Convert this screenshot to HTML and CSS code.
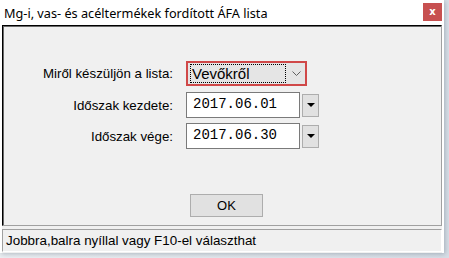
FILE: index.html
```html
<!DOCTYPE html>
<html lang="hu">
<head>
<meta charset="UTF-8" />
<title>Mg-i, vas- és acéltermékek fordított ÁFA lista</title>
<link rel="stylesheet" href="styles.css">
</head>
<body>
  <div class="window" role="dialog" aria-label="Mg-i, vas- és acéltermékek fordított ÁFA lista">
    <div class="titlebar">
      <span class="title">Mg-i, vas- és acéltermékek fordított ÁFA lista</span>
      <button class="close" aria-label="Bezárás">x</button>
    </div>
    <div class="client">
      <div class="panel">
        <div class="row row-first">
          <label class="label">Miről készüljön a lista:</label>
          <div class="combo">
            <span class="combo-focus">Vevőkről</span>
            <svg class="chevron" width="9" height="6" viewBox="0 0 9 6">
              <polyline points="0.5,0.5 4.5,4.5 8.5,0.5" fill="none" stroke="#606060" stroke-width="1"/>
            </svg>
          </div>
        </div>
        <div class="row">
          <label class="label">Időszak kezdete:</label>
          <div class="date-field">2017.06.01</div>
          <div class="drop"><span class="tri"></span></div>
        </div>
        <div class="row row-last">
          <label class="label">Időszak vége:</label>
          <div class="date-field">2017.06.30</div>
          <div class="drop"><span class="tri"></span></div>
        </div>
        <button class="ok">OK</button>
      </div>
      <div class="status">Jobbra,balra nyíllal vagy F10-el választhat</div>
    </div>
  </div>
</body>
</html>
```

FILE: styles.css
```css
* {
  box-sizing: border-box;
}
body {
  margin: 0;
  width: 449px;
  height: 258px;
  overflow: hidden;
  background: linear-gradient(100deg, #eef1f4 0%, #e2e7ec 60%, #d7dee6 100%);
  font-family: 'Liberation Sans', Arial, sans-serif;
  color: #000;
}
.window {
  width: 444px;
  height: 253px;
  background: #fff;
  display: flex;
  flex-direction: column;
  box-shadow: 1px 1px 5px rgba(60, 80, 100, 0.35);
}
.titlebar {
  height: 25px;
  display: flex;
  align-items: flex-start;
  justify-content: space-between;
  padding-left: 4px;
  padding-right: 2px;
}
.title {
  font-family: 'Noto Sans', sans-serif;
  font-size: 12.7px;
  line-height: 16px;
  margin-top: 5px;
  color: #000;
}
.close {
  width: 19px;
  height: 18px;
  margin-top: 3px;
  border: none;
  padding: 0;
  background: #c75050;
  color: #fff;
  font-family: 'DejaVu Sans', sans-serif;
  font-weight: bold;
  font-size: 10px;
  line-height: 16px;
}
.client {
  flex: 1;
  margin-left: 2px;
  width: 440px;
  background: #f0f0f0;
  display: flex;
  flex-direction: column;
  padding-bottom: 1px;
}
.panel {
  height: 201px;
  border-top: 1px solid #000;
  border-left: 1px solid #000;
  border-right: 1px solid #a0a0a0;
  border-bottom: 1px solid #a0a0a0;
  box-shadow: inset 1px 1px 0 #696969;
  padding: 35px 0 0 3px;
  display: flex;
  flex-direction: column;
}
.row {
  display: flex;
  align-items: center;
  margin-bottom: 5px;
}
.row-first {
  margin-bottom: 6px;
}
.row-last {
  margin-bottom: 45px;
}
.label {
  width: 167px;
  text-align: right;
  font-size: 13.3px;
  margin-right: 13px;
}
.combo {
  width: 121px;
  height: 25px;
  border: 2px solid #d04848;
  background: #e5e5e5;
  display: flex;
  align-items: center;
  padding: 0 0 0 2px;
}
.combo-focus {
  width: 96px;
  height: 19px;
  border: 1px dotted #000;
  font-size: 15px;
  line-height: 17px;
  padding-left: 1px;
}
.chevron {
  margin-left: 6px;
}
.date-field {
  width: 114px;
  height: 26px;
  background: #fff;
  border: 1px solid #7a7a7a;
  font-family: 'Liberation Mono', monospace;
  font-size: 14px;
  line-height: 22px;
  padding-left: 6px;
}
.drop {
  width: 17px;
  height: 23px;
  margin-left: 2px;
  background: #e1e1e1;
  border: 1px solid #adadad;
  display: flex;
  align-items: center;
  justify-content: center;
}
.tri {
  width: 0;
  height: 0;
  border-left: 4px solid transparent;
  border-right: 4px solid transparent;
  border-top: 4px solid #000;
}
.ok {
  margin-left: 184px;
  width: 73px;
  height: 23px;
  background: #e1e1e1;
  border: 1px solid #adadad;
  font-family: 'Liberation Sans', Arial, sans-serif;
  font-size: 13px;
  color: #000;
  padding: 0;
}
.status {
  margin-top: 3px;
  height: 23px;
  border-top: 1px solid #a0a0a0;
  border-left: 1px solid #a0a0a0;
  border-right: 1px solid #fff;
  border-bottom: 1px solid #fff;
  font-size: 13.4px;
  line-height: 21px;
  padding-left: 3px;
}
```
